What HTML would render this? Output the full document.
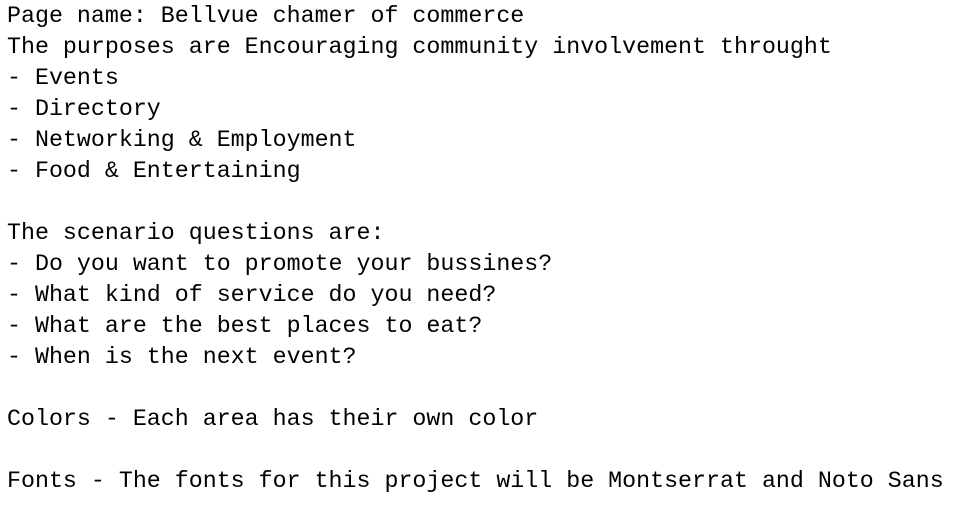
<!DOCTYPE html>
<html><head><meta charset="utf-8"><style>
html,body{margin:0;padding:0;background:#fff;width:962px;height:527px;overflow:hidden}
pre{margin:0;padding:1px 0 0 7px;font-family:"Liberation Mono",monospace;font-size:23.3px;line-height:31px;color:#000}
</style></head><body><pre>Page name: Bellvue chamer of commerce
The purposes are Encouraging community involvement throught
- Events
- Directory
- Networking &amp; Employment
- Food &amp; Entertaining

The scenario questions are:
- Do you want to promote your bussines?
- What kind of service do you need?
- What are the best places to eat?
- When is the next event?

Colors - Each area has their own color

Fonts - The fonts for this project will be Montserrat and Noto Sans</pre></body></html>
